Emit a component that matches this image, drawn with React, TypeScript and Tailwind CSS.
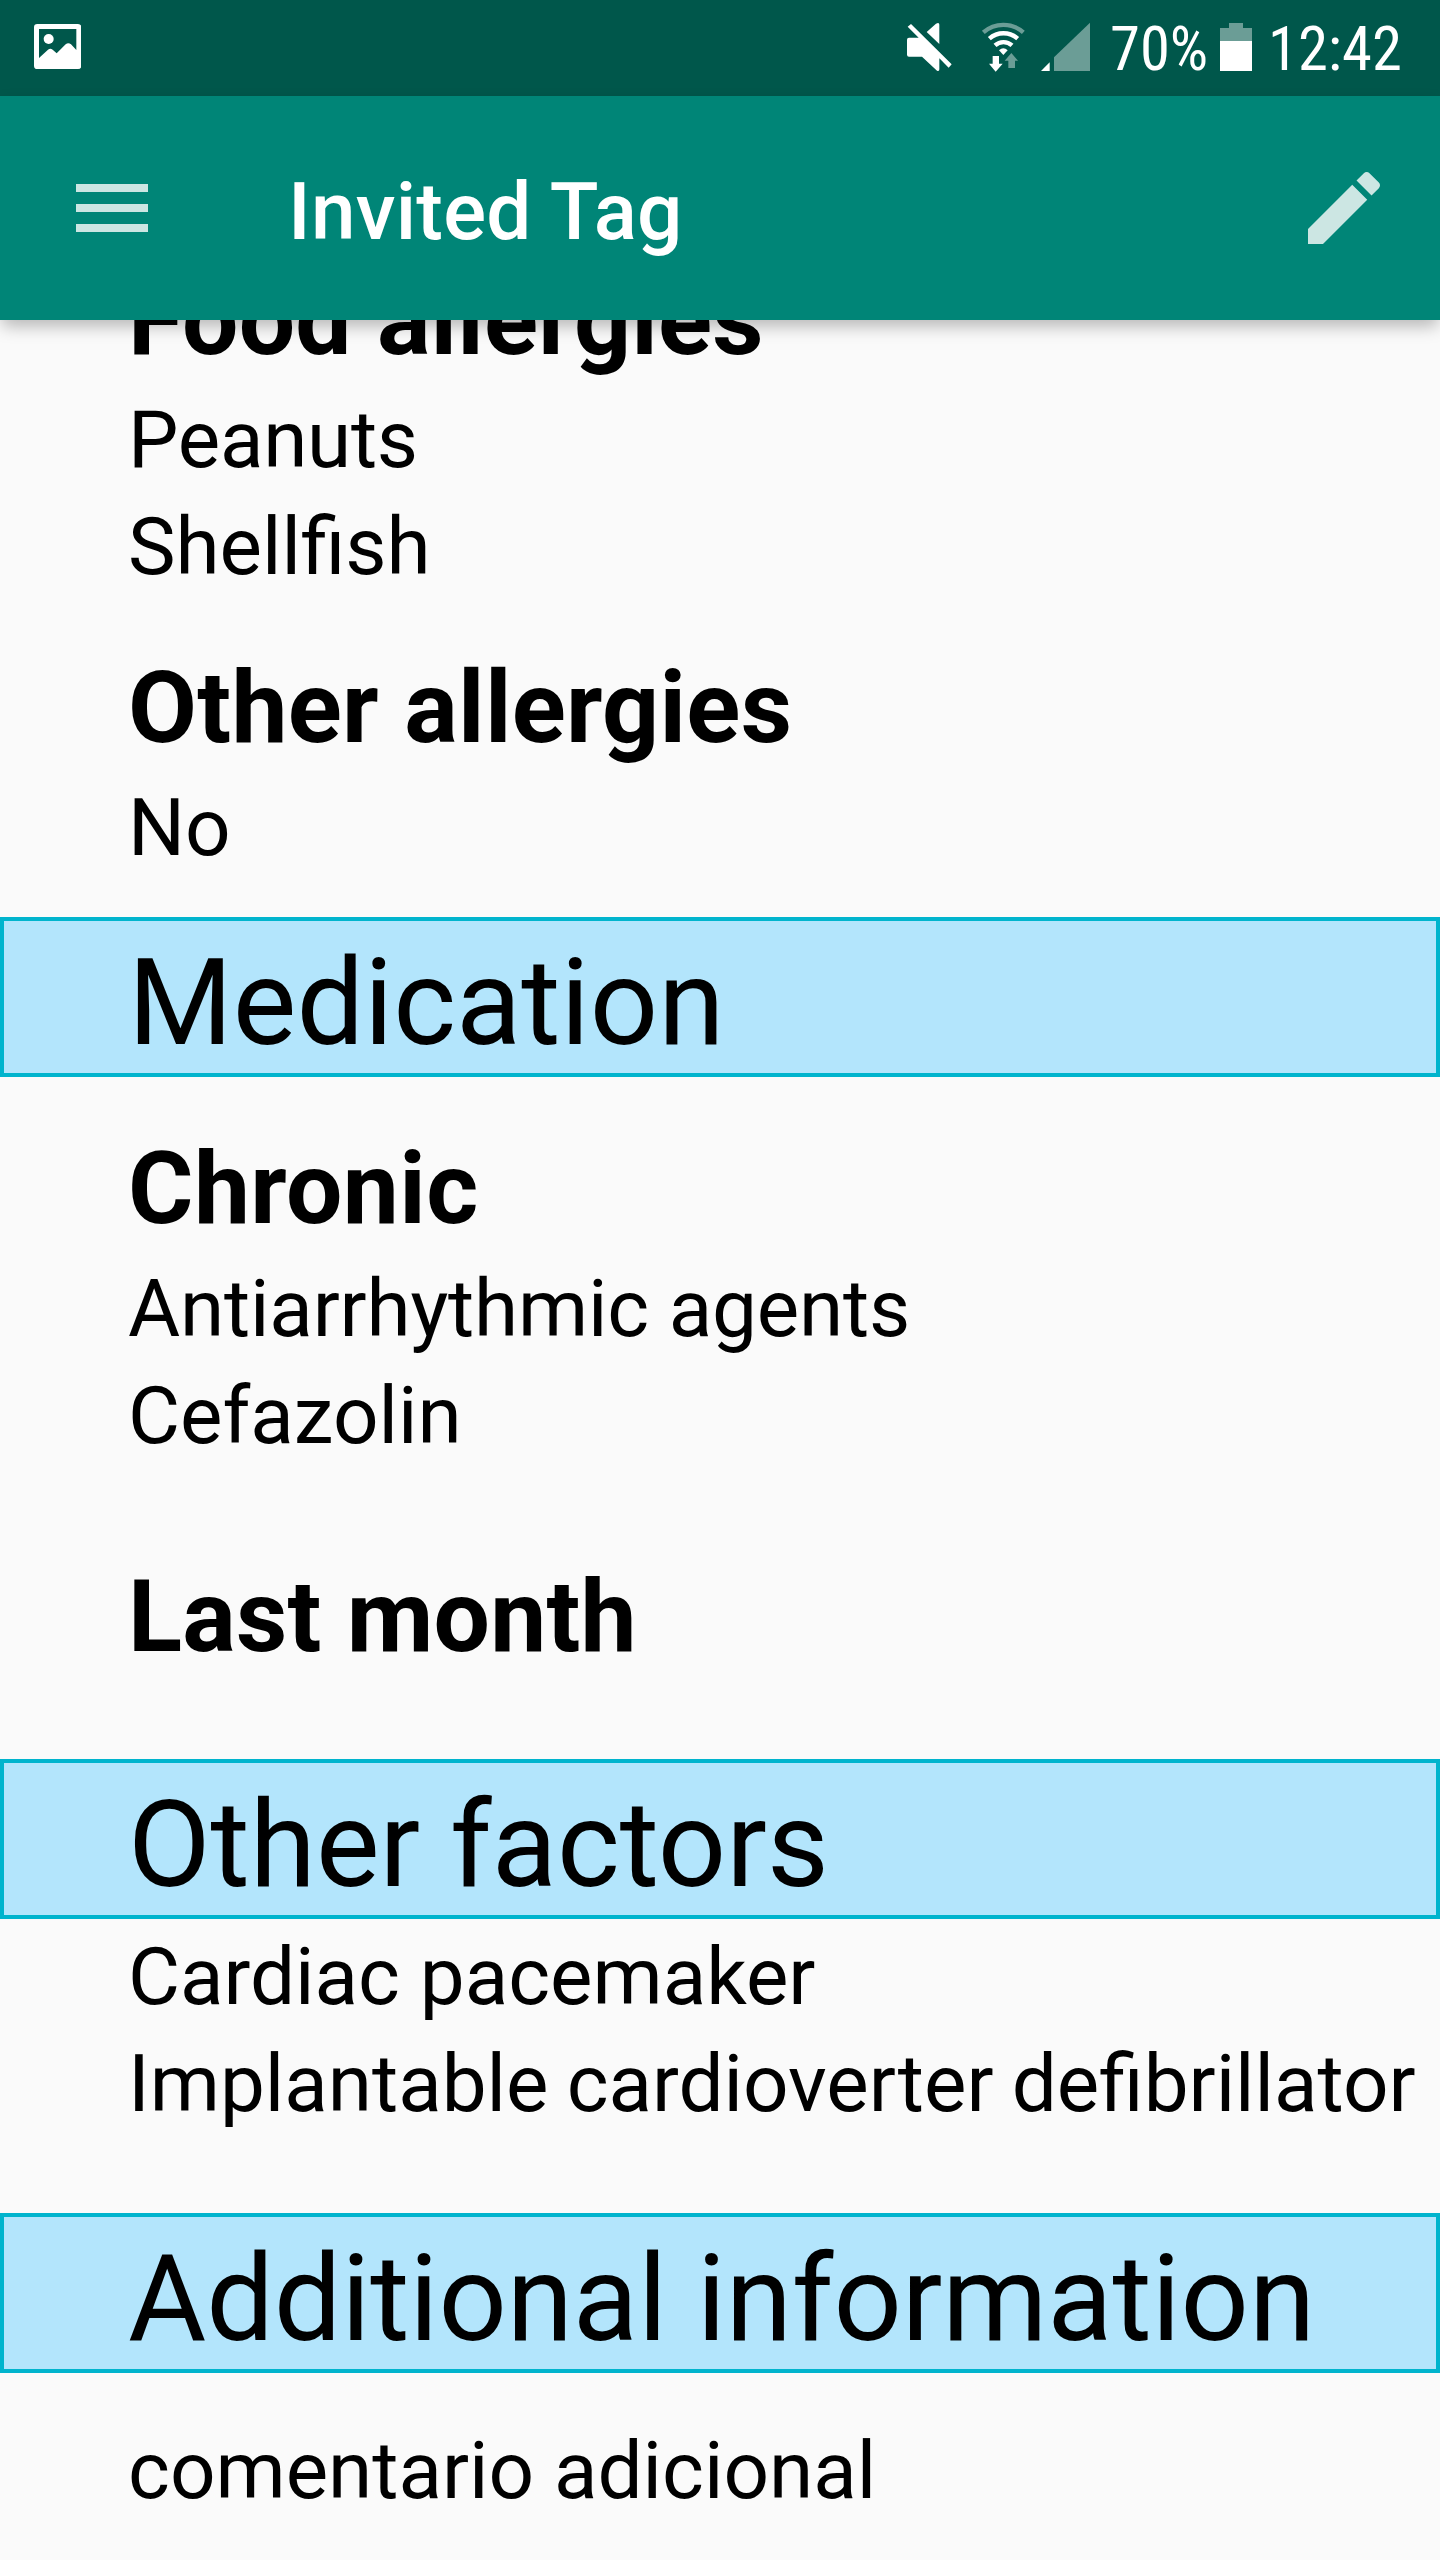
import React from "react";

type TextProps = { children: React.ReactNode; className?: string };

const Title = ({ children, className = "" }: TextProps) => (
  <h2 className={`whitespace-nowrap pb-0.5 pl-32 text-[100px] leading-[131px] font-bold ${className}`}>{children}</h2>
);
const Line = ({ children, className = "" }: TextProps) => (
  <p className={`whitespace-nowrap pl-32 text-[80px] leading-[107px] ${className}`}>{children}</p>
);
const Band = ({ children, className = "" }: TextProps) => (
  <div className={`h-40 whitespace-nowrap border-4 border-[#00b4cd] bg-[#b3e5fc] pl-31 text-[120px] leading-[164px] ${className}`}>{children}</div>
);

const PictureIcon = () => (
  <svg className="h-24 w-[47px]" viewBox="103 0 141 288" fill="#fff">
    <path fillRule="evenodd" d="M113 72H235Q245 72 245 82V197Q245 207 235 207H113Q103 207 103 197V82Q103 72 113 72ZM118 87V174L145 149Q152 143 159 149L171 160L198 133Q206 126 214 133L230 150V87Z" />
    <circle cx="147" cy="117" r="15" />
  </svg>
);
const MuteIcon = () => (
  <svg className="ml-auto h-24 w-[45px]" viewBox="81 0 135 288" fill="#fff">
    <path d="M87 113H116L83 80L93 72L215 193L206 203L178 175V208Q178 215 171 212L126 170H87Q81 170 81 164V119Q81 113 87 113Z" />
    <path d="M140 96L168 71Q178 66 178 74V132Z" />
  </svg>
);
const WifiIcon = () => (
  <svg className="ml-[29px] h-24 w-[45px]" viewBox="303 0 135 288" fill="none" stroke="#fff" strokeWidth="13">
    <path opacity="0.42" d="M310 97A91 91 0 0 1 430 97" />
    <path d="M328 116A64 64 0 0 1 413 116" />
    <path d="M345 136A38 38 0 0 1 396 136" />
    <path stroke="none" fill="#fff" d="M357 151Q370 138 383 151L370 165Z" />
    <path stroke="none" fill="#fff" d="M338 168H357V191H368L347 215L327 191H338Z" />
    <path stroke="none" fill="#fff" opacity="0.42" d="M394 159L414 182H405V204H385V182H374Z" />
  </svg>
);
const SignalIcon = () => (
  <svg className="ml-[15px] h-24 w-[49px]" viewBox="483 0 147 288" fill="#fff">
    <path d="M483 213H509V187Z" />
    <path opacity="0.42" d="M522 213H630V68L522 172Z" />
  </svg>
);
const BatteryIcon = () => (
  <svg className="ml-[14px] h-24 w-8" viewBox="360 0 96 288" fill="#fff">
    <path opacity="0.42" d="M387 69H429V84H456V123H360V84H387Z" />
    <path d="M360 123H456V213H360Z" />
  </svg>
);

export default function App() {
  return (
    <div className="flex h-[2560px] w-[1440px] flex-col overflow-hidden bg-[#fafafa] font-['Roboto',sans-serif] text-black">
      <div className="flex h-24 shrink-0 items-center bg-[#00574b] pr-10 pl-[34px] text-white">
        <PictureIcon />
        <MuteIcon />
        <WifiIcon />
        <SignalIcon />
        <div className="ml-[22px] w-[94px] pt-1">
          <div className="-ml-[2px] whitespace-nowrap text-[60.6px] leading-none [font-stretch:75%]">70%</div>
        </div>
        <BatteryIcon />
        <div className="ml-[20px] w-[128px] pt-1">
          <div className="-ml-[4px] whitespace-nowrap text-[60.6px] leading-none [font-stretch:75%]">12:42</div>
        </div>
      </div>
      <header className="z-10 flex h-56 shrink-0 items-center bg-[#008577] pr-12 pl-16 text-white shadow-[0_8px_16px_-2px_rgba(0,0,0,0.28)]">
        <svg className="size-24 opacity-80" viewBox="0 0 24 24" fill="currentColor"><path d="M3 18h18v-2H3v2zm0-5h18v-2H3v2zm0-7v2h18V6H3z" /></svg>
        <h1 className="ml-32 pt-2 text-[80px] font-medium tracking-[0.25px]">Invited Tag</h1>
        <svg className="ml-auto size-24 opacity-80" viewBox="0 0 24 24" fill="currentColor"><path d="M3 17.25V21h3.75L17.81 9.94l-3.75-3.75L3 17.25zM20.71 7.04c.39-.39.39-1.02 0-1.41l-2.34-2.34c-.39-.39-1.02-.39-1.41 0l-1.83 1.83 3.75 3.75 1.83-1.83z" /></svg>
      </header>
      <main>
        <Title className="-mt-[66px] tracking-[0.2px]">Food allergies</Title>
        <Line className="tracking-[-0.25px]">Peanuts</Line>
        <Line>Shellfish</Line>
        <Title className="mt-[41px] tracking-[0.33px]">Other allergies</Title>
        <Line>No</Line>
        <Band className="mt-[35px]">Medication</Band>
        <Title className="mt-[46px] tracking-[0.45px]">Chronic</Title>
        <Line className="tracking-[-0.17px]">Antiarrhythmic agents</Line>
        <Line>Cefazolin</Line>
        <Title className="mt-[81px] tracking-[0.2px]">Last month</Title>
        <Band className="mt-[75px]">Other factors</Band>
        <Line className="mt-[5px]">Cardiac pacemaker</Line>
        <Line className="[word-spacing:-1.6px]">Implantable cardioverter defibrillator</Line>
        <Band className="mt-[75px] tracking-[-0.14px]">Additional information</Band>
        <Line className="mt-[45px]">comentario adicional</Line>
      </main>
    </div>
  );
}
